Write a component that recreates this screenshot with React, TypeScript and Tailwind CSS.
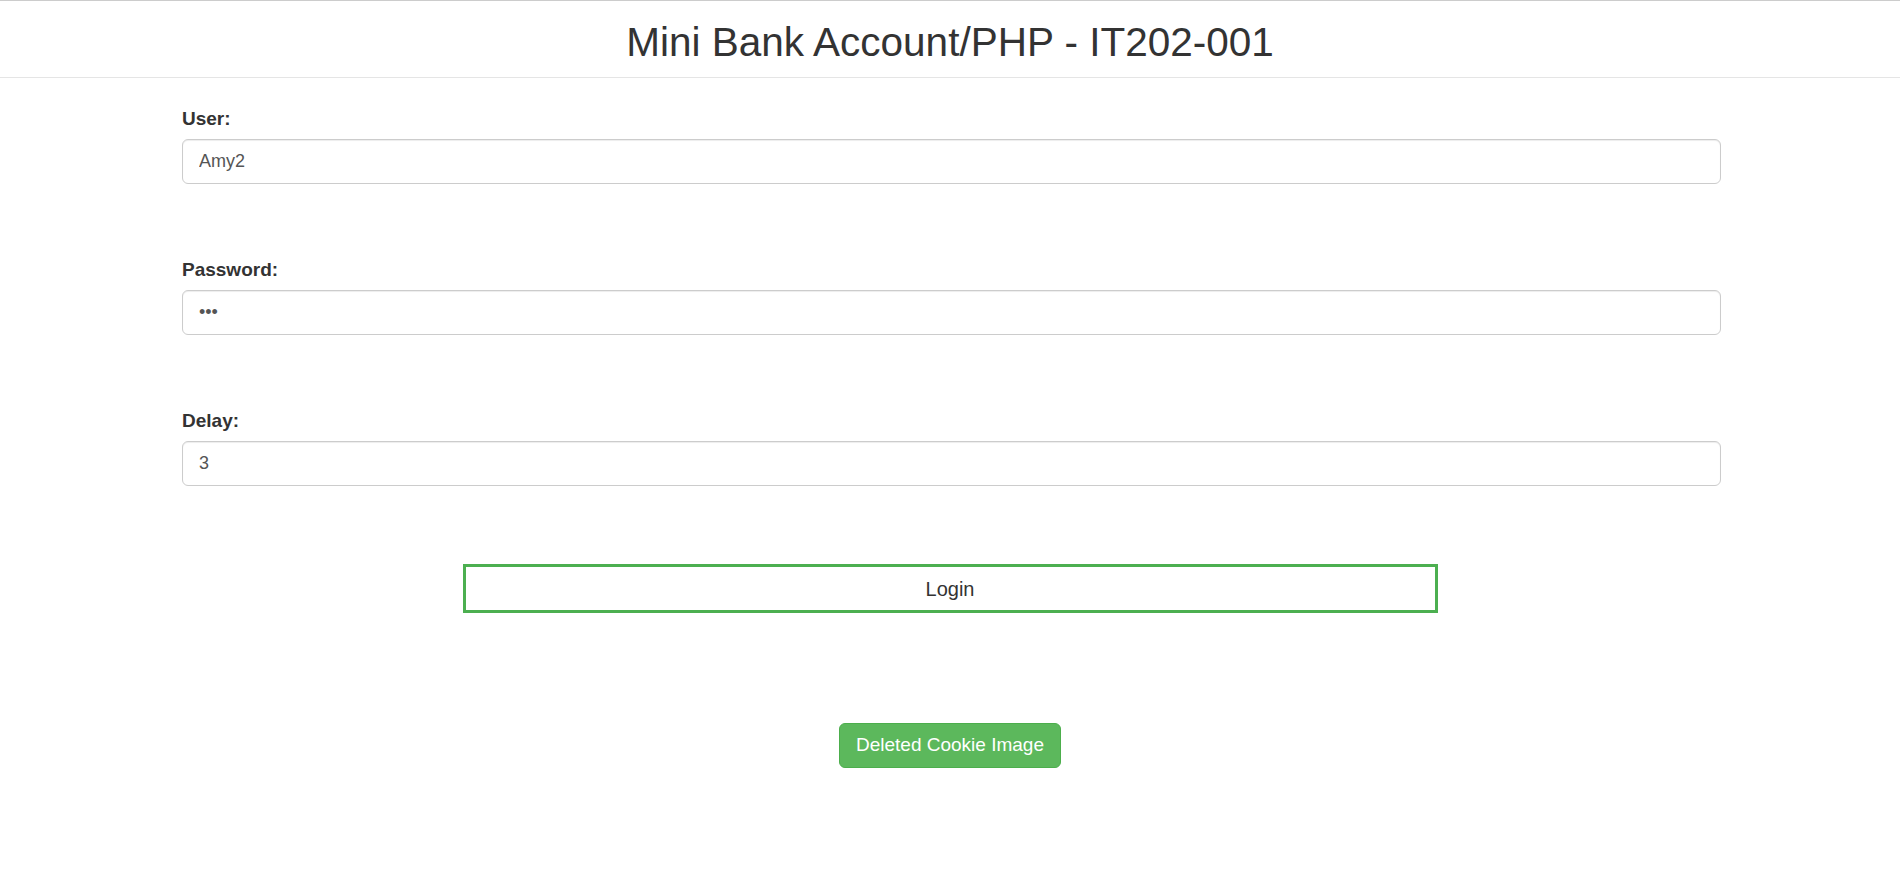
import React from "react";

function Field({ label, type, value }: { label: string; type: string; value: string }) {
  return (
    <div className="flex flex-col">
      <label className="text-[19px] leading-[20px] font-bold text-[#333]">{label}</label>
      <input
        type={type}
        defaultValue={value}
        readOnly
        className="mt-[10px] h-[45px] w-full rounded-[6px] border border-[#ccc] bg-white px-4 text-[18px] text-[#555] shadow-[inset_0_1px_1px_rgba(0,0,0,0.075)] outline-none"
      />
    </div>
  );
}

export default function App() {
  return (
    <div className="min-h-[882px] bg-white font-['Liberation_Sans',Arial,sans-serif] text-[#333]">
      {/* Header */}
      <header className="border-t border-b border-t-[#cccccc] border-b-[#e5e5e5] pt-[18px] pb-[12px] text-center">
        <h1 className="text-[40.5px] leading-[46px] font-normal text-[#333]">
          Mini Bank Account/PHP - IT202-001
        </h1>
      </header>

      {/* Login form */}
      <form className="ml-[182px] w-[1539px] pt-[31px]" onSubmit={(e) => e.preventDefault()}>
        <div className="flex flex-col gap-[76px]">
          <Field label="User:" type="text" value="Amy2" />
          <Field label="Password:" type="password" value="abc" />
          <Field label="Delay:" type="text" value="3" />
        </div>
      </form>

      <div className="mt-[78px] flex justify-center">
        <button
          type="submit"
          className="h-[49px] w-[975px] border-[3px] border-[#4caf50] bg-white text-[20px] text-[#333]"
        >
          Login
        </button>
      </div>

      <div className="mt-[110px] flex justify-center">
        <button
          type="button"
          className="h-[45px] rounded-[6px] border border-[#4cae4c] bg-[#5cb85c] px-[16px] text-[19px] text-white"
        >
          Deleted Cookie Image
        </button>
      </div>
    </div>
  );
}
